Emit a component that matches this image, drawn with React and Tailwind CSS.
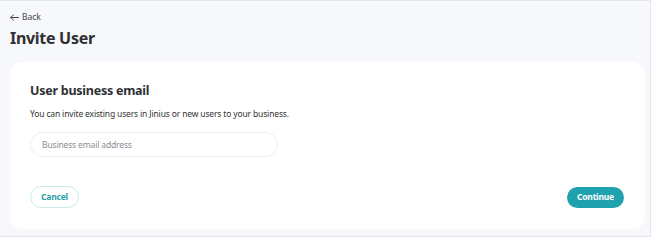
import React, { useState } from "react";

const InviteUser = () => {
  const [email, setEmail] = useState("");

  return (
    <div className="w-[654px] h-[240px] bg-white" style={{ fontFamily: '"Noto Sans", sans-serif' }}>
      {/* page frame */}
      <div className="w-[651px] h-[237px] bg-[#f7f8fc] border-t border-r border-b border-[#e3e5ea] pt-[9px] px-[10px]">
        <button className="flex items-center gap-[3px] text-[8.5px] leading-[12px] text-[#444] mt-[1px]">
          <svg width="9" height="7" viewBox="0 0 9 7" fill="none" stroke="#444" strokeWidth="1" strokeLinecap="round" strokeLinejoin="round">
            <path d="M8.5 3.5H0.8M3.5 0.8L0.8 3.5L3.5 6.2" />
          </svg>
          Back
        </button>
        <h1 className="text-[16px] leading-[22px] font-bold text-[#2f3033] mt-[4px] tracking-[-0.3px]">Invite User</h1>

        {/* card */}
        <div className="mt-[13px] h-[167px] w-[635px] bg-white rounded-[12px] pt-[20px] px-[20px]">
          <h2 className="text-[12.5px] leading-[18px] font-bold text-[#2f3033] tracking-[-0.25px]">User business email</h2>
          <p className="mt-[8px] text-[8.5px] leading-[12px] text-[#333] tracking-[-0.15px]">
            You can invite existing users in Jinius or new users to your business.
          </p>
          <input
            type="text"
            placeholder="Business email address"
            value={email}
            onChange={(e) => setEmail(e.target.value)}
            className="mt-[12px] w-[248px] h-[25px] rounded-full border border-[#eceef2] px-[11px] text-[8.5px] tracking-[-0.15px] text-[#333] placeholder:text-[#8a8d93] outline-none"
          />

          <div className="flex justify-between items-center mt-[29px]">
            <button className="h-[22px] px-[10px] rounded-full border border-[#c9ebee] text-[#2a9ea8] text-[8.5px] font-bold tracking-[-0.2px]">
              Cancel
            </button>
            <button className="h-[21px] px-[10px] mr-[1px] rounded-full bg-[#1fa2ad] text-white text-[8.5px] font-bold tracking-[-0.2px]">
              Continue
            </button>
          </div>
        </div>
      </div>
    </div>
  );
};

export default InviteUser;
